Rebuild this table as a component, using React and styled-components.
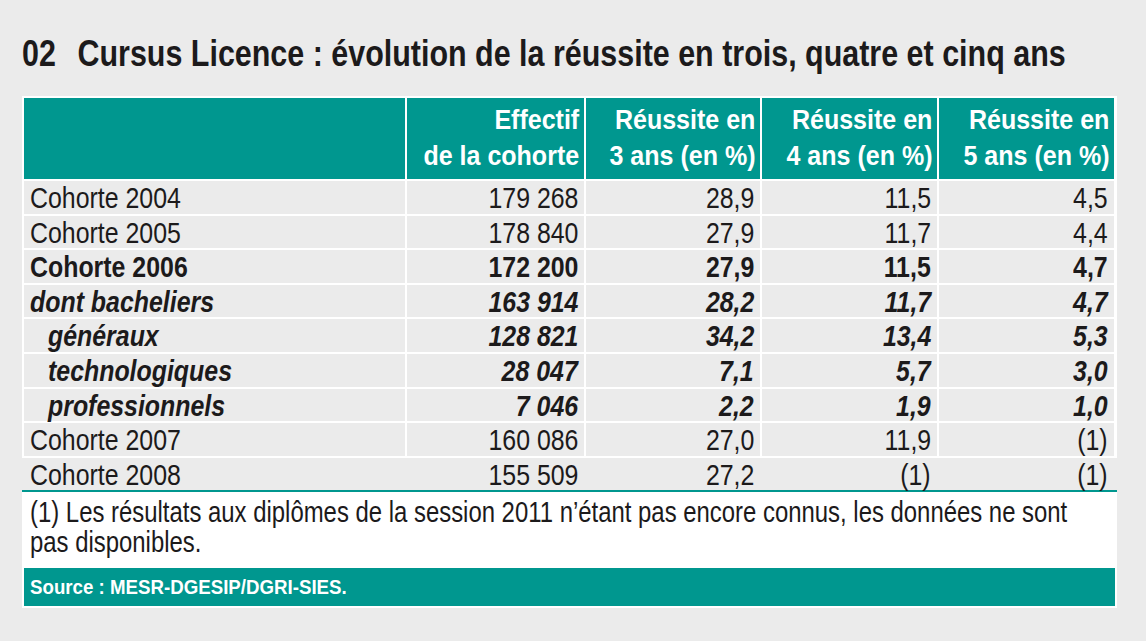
import React from "react";
import styled, { createGlobalStyle } from "styled-components";

const TEAL = "#00978f";
const GRAY = "#ebebeb";
const INK = "#1c1a1b";
const FONT = `"Liberation Sans", Arial, Helvetica, sans-serif`;
const NARROW = 0.83;

const Global = createGlobalStyle`
  html, body { margin: 0; padding: 0; background: ${GRAY}; }
  body { font-family: ${FONT}; color: ${INK}; }
`;

/* Condensed face emulation: Liberation Sans squeezed horizontally */
const Squeeze = styled.span`
  display: inline-block;
  white-space: nowrap;
  transform: scaleX(${(p) => p.$scale || NARROW});
  transform-origin: ${(p) => (p.$right ? "right center" : "left center")};
`;

const Page = styled.div`
  width: 1146px;
  height: 641px;
  padding: 32px 0 0 22px;
  box-sizing: border-box;
  overflow: hidden;
`;

const Title = styled.h1`
  margin: 0 0 20px 0;
  font-size: 36.7px;
  line-height: 44px;
  font-weight: 700;
`;

const Num = styled.span`
  margin-right: 26px;
`;

const Frame = styled.div`
  width: 1095px;
  background: #fff;
  display: flex;
  flex-direction: column;
`;

const COLS = "381px 177px 174px 175px 175px";

const Grid = styled.div`
  display: grid;
  grid-template-columns: ${COLS};
  gap: 2px;
  padding: 2px;
`;

const HeadCell = styled.div`
  background: ${TEAL};
  color: #fff;
  font-weight: 700;
  font-size: 27.5px;
  line-height: 36px;
  height: 81px;
  box-sizing: border-box;
  padding: 0 5px 5.5px 6px;
  display: flex;
  flex-direction: column;
  justify-content: flex-end;
  align-items: flex-end;
`;

const Cell = styled.div`
  background: ${GRAY};
  height: 32.6px;
  font-size: 30px;
  line-height: 34.6px;
  display: flex;
  justify-content: ${(p) => (p.$label ? "flex-start" : "flex-end")};
  padding: ${(p) => (p.$label ? `0 0 0 ${p.$indent ? 24 : 6}px` : "0 6px 0 0")};
  font-weight: ${(p) => (p.$bold ? 700 : 400)};
  font-style: ${(p) => (p.$italic ? "italic" : "normal")};
`;

const LastRow = styled.div`
  display: grid;
  grid-template-columns: ${COLS};
  column-gap: 2px;
  padding: 0 2px;
  background: ${GRAY};
  border-bottom: 2px solid ${TEAL};
`;

const Notes = styled.div`
  height: 76px;
  box-sizing: border-box;
  padding: 5px 0 0 8px;
  overflow: hidden;
`;

const NotesText = styled.p`
  margin: 0;
  width: 1272px;
  font-size: 28.8px;
  line-height: 30px;
  transform: scaleX(${NARROW});
  transform-origin: left top;
`;

const Source = styled.div`
  margin: 0 2px 2px 2px;
  height: 38px;
  background: ${TEAL};
  color: #fff;
  font-weight: 700;
  font-size: 21px;
  line-height: 38px;
  padding-left: 6px;
`;

const rows = [
  { label: "Cohorte 2004", v: ["179 268", "28,9", "11,5", "4,5"] },
  { label: "Cohorte 2005", v: ["178 840", "27,9", "11,7", "4,4"] },
  { label: "Cohorte 2006", v: ["172 200", "27,9", "11,5", "4,7"], bold: true },
  { label: "dont bacheliers", v: ["163 914", "28,2", "11,7", "4,7"], bold: true, italic: true },
  { label: "généraux", v: ["128 821", "34,2", "13,4", "5,3"], bold: true, italic: true, indent: true },
  { label: "technologiques", v: ["28 047", "7,1", "5,7", "3,0"], bold: true, italic: true, indent: true },
  { label: "professionnels", v: ["7 046", "2,2", "1,9", "1,0"], bold: true, italic: true, indent: true },
  { label: "Cohorte 2007", v: ["160 086", "27,0", "11,9", "(1)"] },
];
const last = { label: "Cohorte 2008", v: ["155 509", "27,2", "(1)", "(1)"] };

const heads = [
  ["", ""],
  ["Effectif", "de la cohorte"],
  ["Réussite en", "3 ans (en %)"],
  ["Réussite en", "4 ans (en %)"],
  ["Réussite en", "5 ans (en %)"],
];

function Row({ r }) {
  return (
    <>
      <Cell $label $bold={r.bold} $italic={r.italic} $indent={r.indent}>
        <Squeeze>{r.label}</Squeeze>
      </Cell>
      {r.v.map((x, i) => (
        <Cell key={i} $bold={r.bold} $italic={r.italic}>
          <Squeeze $right>{x}</Squeeze>
        </Cell>
      ))}
    </>
  );
}

export default function App() {
  return (
    <Page>
      <Global />
      <Title>
        <Squeeze>
          <Num>02</Num>Cursus Licence : évolution de la réussite en trois, quatre et cinq ans
        </Squeeze>
      </Title>
      <Frame>
        <Grid>
          {heads.map((h, i) => (
            <HeadCell key={i}>
              {h[0] && <Squeeze $right $scale={0.91}>{h[0]}</Squeeze>}
              {h[1] && <Squeeze $right $scale={0.91}>{h[1]}</Squeeze>}
            </HeadCell>
          ))}
          {rows.map((r, i) => (
            <Row key={i} r={r} />
          ))}
        </Grid>
        <LastRow>
          <Row r={last} />
        </LastRow>
        <Notes>
          <NotesText>
            (1) Les résultats aux diplômes de la session 2011 n’étant pas encore connus, les données ne sont pas disponibles.
          </NotesText>
        </Notes>
        <Source>
          <Squeeze $scale={0.89}>Source : MESR-DGESIP/DGRI-SIES.</Squeeze>
        </Source>
      </Frame>
    </Page>
  );
}
